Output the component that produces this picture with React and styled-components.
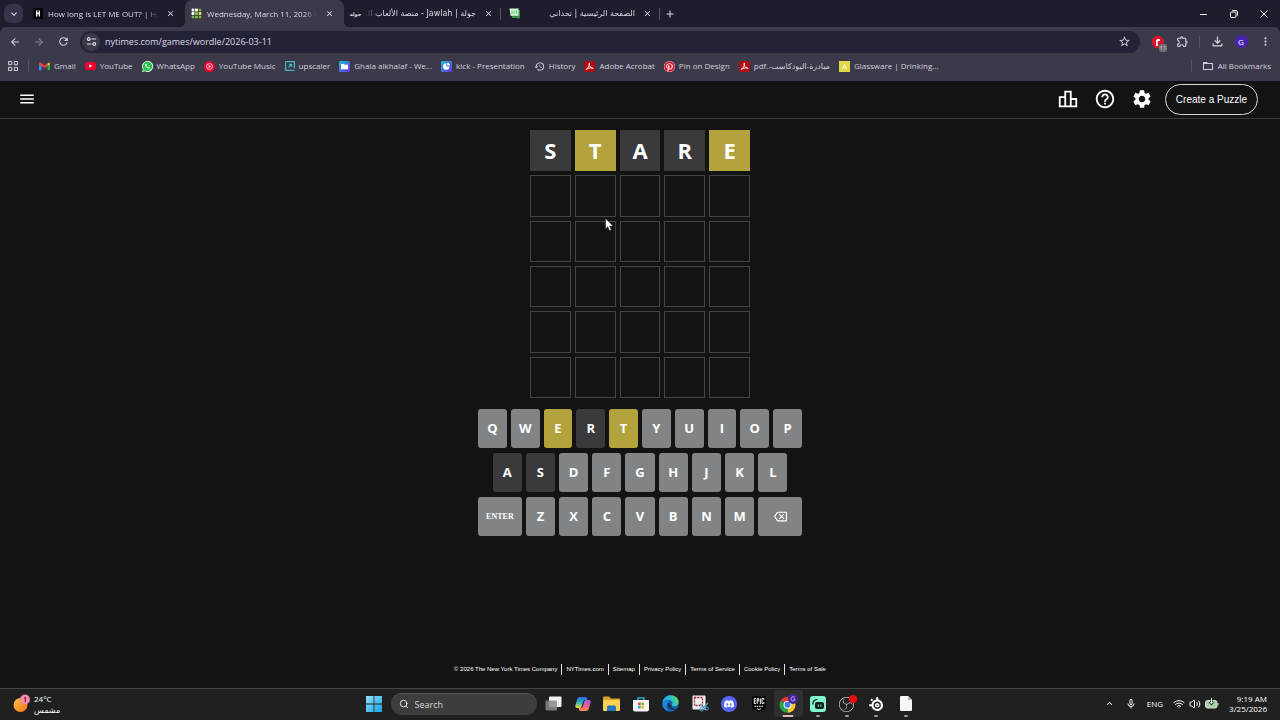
import styled, { createGlobalStyle, css } from "styled-components";
import {
    MdArrowBack,
    MdArrowForward,
    MdRefresh,
    MdStarOutline,
    MdOutlineExtension,
    MdOutlineFileDownload,
    MdMoreVert,
    MdHistory,
    MdFolderOpen,
    MdHelpOutline,
    MdSettings,
    MdOutlineLeaderboard,
    MdOutlineBackspace,
    MdKeyboardArrowDown,
    MdKeyboardArrowUp,
    MdMenu,
    MdAdd,
    MdClose,
    MdMicNone,
} from "react-icons/md";
import { FaPinterest } from "react-icons/fa";
import { SiDiscord, SiObsstudio, SiSteelseries } from "react-icons/si";
import { Search, Wifi, Volume2 } from "lucide-react";

const GlobalStyle = createGlobalStyle`
   * {
      box-sizing: border-box;
   }
   body {
      margin: 0;
      background-color: #131313;
      font-family: "Open Sans", "DejaVu Sans", sans-serif;
   }
   button {
      padding: 0;
      border: none;
      background: none;
      color: inherit;
      font-family: inherit;
      cursor: pointer;
   }
   a {
      color: inherit;
      text-decoration: none;
   }
   svg {
      display: block;
      flex: none;
   }
`;

const Screen = styled.div`
   min-height: 100vh;
   display: flex;
   flex-direction: column;
   color: #ffffff;
`;

// Browser chrome
const TabStrip = styled.div`
   height: 27px;
   display: flex;
   align-items: center;
   padding: 0 1px 0 4px;
   background-color: #1f1c2e;
   color: #dcd9e6;
`;
const TabMenu = styled.button`
   width: 19px;
   height: 19px;
   margin-right: 3px;
   display: flex;
   align-items: center;
   justify-content: center;
   border-radius: 7px;
   background-color: #36334a;
`;
const Tab = styled.div`
   flex: 0 1 159px;
   min-width: 0;
   height: 27px;
   display: flex;
   align-items: center;
   gap: 5px;
   padding: 0 ${(props) => (props.$divided ? "2px" : "8px")} 0 6px;
   position: relative;
   ${(props) =>
       props.$active &&
       css`
          background-color: #3b394a;
          border-radius: 7px 7px 0 0;
          &::before,
          &::after {
             content: "";
             position: absolute;
             bottom: 0;
             width: 5px;
             height: 5px;
          }
          &::before {
             left: -5px;
             background: radial-gradient(circle at 0 0, transparent 5px, #3b394a 5px);
          }
          &::after {
             right: -5px;
             background: radial-gradient(circle at 100% 0, transparent 5px, #3b394a 5px);
          }
       `}
`;
const Favicon = styled.span`
   width: 11px;
   flex: none;
   display: flex;
   justify-content: center;
   font: bold 5px "DejaVu Sans", sans-serif;
`;
const TabTitle = styled.span`
   flex: 1;
   min-width: 0;
   overflow: hidden;
   white-space: nowrap;
   font-size: 8px;
   line-height: 14px;
   direction: ${(props) => (props.$rtl ? "rtl" : "ltr")};
   font-family: ${(props) => (props.$rtl ? '"DejaVu Sans", sans-serif' : "inherit")};
   mask-image: linear-gradient(${(props) => (props.$rtl ? "to left" : "to right")}, #000 88%, transparent);
`;
const TabClose = styled.button`
   width: 14px;
   height: 14px;
   flex: none;
   display: flex;
   align-items: center;
   justify-content: center;
`;
const Divider = styled.span`
   width: 1px;
   height: 12px;
   flex: none;
   background-color: #56536a;
`;
const NewTab = styled.button`
   width: 16px;
   height: 20px;
   flex: none;
   display: flex;
   align-items: center;
   justify-content: center;
`;
const WindowButtons = styled.div`
   margin-left: auto;
   display: flex;
`;
const WindowButton = styled.button`
   width: 30px;
   height: 27px;
   display: flex;
   align-items: center;
   justify-content: center;
`;
const ToolArea = styled.div`
   background-color: #1f1c2e;
`;
const ToolInner = styled.div`
   background-color: #3b394a;
   border-radius: 6px 6px 0 0;
   color: #d3d0de;
`;
const NavBar = styled.div`
   display: flex;
   align-items: center;
   padding: 3px 3px 0;
   height: 26px;
`;
const NavButton = styled.button`
   width: 24px;
   height: 22px;
   flex: none;
   display: flex;
   align-items: center;
   justify-content: center;
   position: relative;
   color: ${(props) => (props.$dim ? "#85828f" : "inherit")};
`;
const AddressBar = styled.form`
   flex: 1;
   height: 22px;
   margin: 0 6px 0 5px;
   padding: 0 4px 0 2px;
   display: flex;
   align-items: center;
   gap: 5px;
   border-radius: 11px;
   background-color: #242236;
`;
const SiteInfo = styled.button`
   width: 18px;
   height: 18px;
   display: flex;
   align-items: center;
   justify-content: center;
   border-radius: 50%;
   background-color: #3b394a;
`;
const AddressInput = styled.input`
   flex: 1;
   min-width: 0;
   border: none;
   outline: none;
   padding: 0;
   background: none;
   color: #dcd9e6;
   font-family: inherit;
   font-size: 9px;
`;
const NavDivider = styled(Divider)`
   margin: 0 5px;
`;
const ExtBadge = styled.span`
   position: absolute;
   right: 3px;
   bottom: 1px;
   width: 8px;
   height: 8px;
   border-radius: 2px;
   background-color: #6d6d70;
   font-size: 6px;
   line-height: 8px;
   text-align: center;
`;
const Avatar = styled.span`
   width: 13px;
   height: 13px;
   border-radius: 50%;
   background-color: #4a22b0;
   color: #ffffff;
   font-size: 8px;
   line-height: 13px;
   text-align: center;
`;
const BookmarkBar = styled.nav`
   height: 28px;
   padding: 0 9px 2px 8px;
   display: flex;
   align-items: center;
   gap: 9px;
   overflow: hidden;
`;
const BookmarkDivider = styled(Divider)`
   margin: 0 1px;
`;
const Bookmark = styled.a`
   display: flex;
   align-items: center;
   gap: 4px;
   white-space: nowrap;
   font-size: 8px;
   line-height: 12px;
`;
const BookmarkEnd = styled.div`
   margin-left: auto;
   display: flex;
   align-items: center;
   gap: 10px;
`;
const PinIcon = styled(FaPinterest)`
   color: #d8102c;
   background-color: #ffffff;
   border-radius: 50%;
`;

// Game
const GameHeader = styled.header`
   height: 38px;
   display: flex;
   align-items: center;
   justify-content: space-between;
   padding: 0 22px 1px 18px;
   border-bottom: 1px solid #3a3a3c;
`;
const HeaderTools = styled.div`
   display: flex;
   align-items: center;
   gap: 12px;
`;
const HeaderIcons = styled.div`
   display: flex;
   gap: 15px;
`;
const HeaderButton = styled.button`
   display: flex;
`;
const CreateButton = styled.button`
   height: 31px;
   padding: 0 10px;
   border: 1px solid #d8d8d8;
   border-radius: 16px;
   font-family: "Liberation Sans", sans-serif;
   font-size: 10px;
   font-weight: 500;
`;
const Game = styled.main`
   flex: 1;
   display: flex;
   flex-direction: column;
   align-items: center;
   gap: 11px;
   padding: 11px 0;
`;
const Board = styled.div`
   position: relative;
   width: 220px;
   height: 268px;
   display: grid;
   grid-template-columns: repeat(5, 1fr);
   grid-template-rows: repeat(6, 1fr);
   gap: 4px;
`;
const Tile = styled.div`
   display: flex;
   align-items: center;
   justify-content: center;
   padding-bottom: 2px;
   font-size: 22px;
   font-weight: 700;
   line-height: 1;
   ${(props) =>
       props.$state
           ? css`
                background-color: ${props.$state === "present" ? "#b3a33c" : "#3a3a3c"};
             `
           : css`
                border: 1px solid #444446;
             `}
`;
const Pointer = styled.svg`
   position: absolute;
   left: 75px;
   top: 88px;
`;
const Keyboard = styled.div`
   width: 324px;
   display: flex;
   flex-direction: column;
   gap: 5px;
`;
const KeyRow = styled.div`
   display: flex;
   gap: 4px;
`;
const Spacer = styled.div`
   flex: 0.5;
   margin-right: ${(props) => (props.$start ? "-4px" : "0")};
   margin-left: ${(props) => (props.$start ? "0" : "-4px")};
`;
const keyColors = { present: "#b3a33c", absent: "#3a3a3c", unused: "#818384" };
const Key = styled.button`
   flex: ${(props) => (props.$wide ? 1.5 : 1)};
   min-width: 0;
   height: 39px;
   padding-bottom: 1px;
   display: flex;
   align-items: center;
   justify-content: center;
   border-radius: 3px;
   background-color: ${(props) => keyColors[props.$state || "unused"]};
   font-size: 13px;
   font-weight: 700;
`;
const EnterLabel = styled.span`
   font-family: "Liberation Serif", serif;
   font-size: 8px;
`;
const Footer = styled.footer`
   display: flex;
   justify-content: center;
   padding-bottom: 13px;
   font-family: "Liberation Sans", sans-serif;
   font-size: 6px;
   line-height: 11px;
`;
const FooterLink = styled.a`
   padding: 0 4px;
   white-space: nowrap;
   & + & {
      border-left: 1px solid #e4e4e4;
   }
`;

// Taskbar
const Taskbar = styled.div`
   height: 32px;
   display: grid;
   grid-template-columns: 1fr auto 1fr;
   align-items: center;
   padding: 0 13px 2px;
   border-top: 1px solid #444444;
   background-color: #202020;
`;
const Weather = styled.button`
   justify-self: start;
   display: flex;
   align-items: center;
   gap: 4px;
   text-align: left;
`;
const WeatherText = styled.span`
   display: flex;
   flex-direction: column;
   font-size: 8px;
   line-height: 11px;
`;
const TaskCenter = styled.div`
   display: flex;
   align-items: center;
   gap: 2px;
`;
const AppList = styled.div`
   width: 382px;
   display: grid;
   grid-template-columns: repeat(13, 1fr);
`;
const TaskButton = styled.button`
   min-width: 29px;
   height: 27px;
   position: relative;
   display: flex;
   align-items: center;
   justify-content: center;
   border-radius: 3px;
   background-color: ${(props) => (props.$run === "active" ? "#2f2f30" : "transparent")};
   ${(props) =>
       props.$run &&
       css`
          &::after {
             content: "";
             position: absolute;
             bottom: 0;
             left: 50%;
             width: ${props.$run === "active" ? "11px" : "4px"};
             height: 2px;
             border-radius: 1px;
             transform: translateX(-50%);
             background-color: ${props.$run === "active" ? "#d9bcc0" : "#9a9a9a"};
          }
       `}
`;
const TaskSearch = styled.label`
   width: 146px;
   height: 22px;
   display: flex;
   align-items: center;
   gap: 6px;
   padding: 0 8px;
   border-radius: 11px;
   border-top: 1px solid #545454;
   background-color: #3d3d3d;
`;
const TaskSearchInput = styled.input`
   flex: 1;
   min-width: 0;
   padding: 0;
   border: none;
   outline: none;
   background: none;
   color: #ffffff;
   font-family: inherit;
   font-size: 9px;
   &::placeholder {
      color: #d6d6d6;
   }
`;
const Tray = styled.div`
   justify-self: end;
   display: flex;
   align-items: center;
   gap: 10px;
`;
const TrayGroup = styled.div`
   display: flex;
   align-items: center;
   gap: 4px;
`;
const TrayText = styled.span`
   font-size: 8px;
   line-height: 10px;
   text-align: right;
`;

// Icons
const HowLongIcon = () => (
    <svg width="10" height="11" viewBox="0 0 10 11">
        <rect width="10" height="11" fill="#050505" />
        <path d="M3 2.500h1.400v2.200h1.200V2.500H7v6H5.600V6H4.400v2.500H3z" fill="#fff" />
    </svg>
);
const WordleIcon = () => (
    <svg width="11" height="11" viewBox="0 0 11 11">
        <rect width="11" height="11" fill="#111" />
        <path d="M.5.5h3v3h-3zM4 .5h3v3H4zM.5 4h3v3h-3z" fill="#fff" />
        <path d="M7.500.5h3v3h-3zM4 4h3v3H4zM.5 7.500h3v3h-3zM4 7.500h3v3H4zM7.500 7.500h3v3h-3z" fill="#7fb04f" />
        <path d="M7.500 4h3v3h-3z" fill="#d3cf6a" />
    </svg>
);
const ChallengeIcon = () => (
    <svg width="11" height="11" viewBox="0 0 11 11">
        <path d="M2 2h9v7l-1 2-2-1H3z" fill="#2e8f49" />
        <path d="M.5.5h9v7.300h-8z" fill="#d5f5d3" />
        <path d="M3 2.500v3.500M5.200 2.500v3.500M7.500 2v4" stroke="#6bc078" />
    </svg>
);
const TuneIcon = () => (
    <svg width="11" height="11" viewBox="0 0 12 12" fill="none" stroke="#dcd9e6" strokeWidth="1.300">
        <circle cx="3" cy="3.300" r="1.500" />
        <path d="M6 3.300h5M1 8.700h5" />
        <circle cx="9" cy="8.700" r="1.500" />
    </svg>
);
const RestoreIcon = () => (
    <svg width="8" height="8" viewBox="0 0 8 8" fill="none" stroke="#fff">
        <rect x="0.500" y="2" width="5.500" height="5.500" rx="1.200" />
        <path d="M2.300.600H6a1.500 1.500 0 0 1 1.500 1.500v3.600" />
    </svg>
);
const AppsIcon = () => (
    <svg width="10" height="10" viewBox="0 0 10 10" fill="none" stroke="#d3d0de">
        <path d="M.5.5h3.200v3.200H.5zM6.300.5h3.200v3.200H6.300zM.5 6.300h3.200v3.200H.5zM6.300 6.300h3.200v3.200H6.300z" />
    </svg>
);
const AdBlockIcon = () => (
    <svg width="12" height="12" viewBox="0 0 12 12">
        <path d="M3.500 0h5L12 3.500v5L8.500 12h-5L0 8.500v-5z" fill="#d4152c" />
        <path d="M4 10V5.200C4 3 6 2.500 8 3.200V5H5.800v5z" fill="#fff" />
    </svg>
);
const GmailIcon = () => (
    <svg width="11" height="9" viewBox="0 0 12 9">
        <path d="M0 1.500V8.500h2.700V3.500z" fill="#4285f4" />
        <path d="M12 1.500V8.500H9.300V3.500z" fill="#34a853" />
        <path d="M0 1.200C0 0 1.400-.3 2.200.4L6 3.400v3L0 2z" fill="#ea4335" />
        <path d="M6 3.400l3.300-2.600v3.100L6 6.400z" fill="#ea4335" />
        <path d="M9.300.9c1-.9 2.700-.7 2.700.6v.6L9.300 4z" fill="#fbbc04" />
    </svg>
);
const YoutubeIcon = () => (
    <svg width="11" height="8" viewBox="0 0 11 8">
        <rect width="11" height="8" rx="2.200" fill="#f0002c" />
        <path d="M4.400 2.200v3.600L7.400 4z" fill="#fff" />
    </svg>
);
const WhatsIcon = () => (
    <svg width="11" height="11" viewBox="0 0 24 24">
        <path d="M0 24l1.700-6.200A12 12 0 1 1 6.300 22.400z" fill="#e9fff0" />
        <path d="M2 22l1.400-5A10.200 10.200 0 1 1 7 20.700z" fill="#27c24c" />
        <path d="M8 6.500c-1.500 1.200-1.300 3.500 1.500 6.600s5.500 4.300 7.200 3c1-.8 1-1.600.6-1.900l-2.200-1.200-1.300 1.300c-1.500-.6-3-2-3.600-3.500l1-1.200-1-2.600c-.5-.8-1.500-.9-2.200-.5z" fill="#fff" />
    </svg>
);
const YtMusicIcon = () => (
    <svg width="11" height="11" viewBox="0 0 11 11">
        <circle cx="5.500" cy="5.500" r="5.500" fill="#f0002c" />
        <circle cx="5.500" cy="5.500" r="2.900" fill="none" stroke="#fff" strokeWidth="0.800" />
        <path d="M4.600 3.900v3.200l2.500-1.600z" fill="#fff" />
    </svg>
);
const UpscalerIcon = () => (
    <svg width="10" height="10" viewBox="0 0 10 10" fill="none" stroke="#45b6bd" strokeWidth="1.200">
        <path d="M2.500.6H9.400V7.500M.6 2.500v6.900h6.900M.6.6h2M3.500 6.500l3-3M4 3.400h2.600V6" />
        <path d="M.6.6v2M9.400 9.400h-2" />
    </svg>
);
const CanvaFolderIcon = () => (
    <svg width="11" height="11" viewBox="0 0 11 11">
        <defs>
            <linearGradient id="cv" x1="0" y1="0" x2="1" y2="1">
                <stop offset="0" stopColor="#17c3d4" />
                <stop offset="1" stopColor="#6d2be8" />
            </linearGradient>
        </defs>
        <rect width="11" height="11" rx="1.500" fill="url(#cv)" />
        <path d="M2 3h3l.8.8H9V8.200H2z" fill="#fff" />
    </svg>
);
const CanvaDeckIcon = () => (
    <svg width="11" height="11" viewBox="0 0 11 11">
        <rect width="11" height="11" rx="1.500" fill="url(#cv)" />
        <path d="M5.300 2.300A3.200 3.200 0 1 0 8.500 5.500H5.300z" fill="#fff" />
        <path d="M6.300 1.800v2.600h2.600A2.600 2.600 0 0 0 6.300 1.800z" fill="#fff" />
    </svg>
);
const AcrobatIcon = () => (
    <svg width="11" height="11" viewBox="0 0 11 11">
        <rect width="11" height="11" rx="2" fill="#b30b12" />
        <path d="M2 8.600C4 7.500 5.600 5 5.500 2.200c-.8 0-.6 1.600.4 3.200.8 1.300 2 2.200 3.200 2.100.3-1.200-4.200-1-7.100 1.100z" fill="none" stroke="#fff" strokeWidth="0.900" />
    </svg>
);
const GlasswareIcon = () => (
    <svg width="11" height="11" viewBox="0 0 11 11">
        <rect width="11" height="11" fill="#e0d94a" />
        <path d="M3.700 8L5.500 3l1.800 5M4.300 6.400h2.400" fill="none" stroke="#fbf9d0" strokeWidth="0.900" />
    </svg>
);
const WeatherIcon = () => (
    <svg width="17" height="19" viewBox="0 0 17 19">
        <defs>
            <linearGradient id="sun" x1="0" y1="0" x2="1" y2="1">
                <stop offset="0" stopColor="#ffc04a" />
                <stop offset="1" stopColor="#ee7411" />
            </linearGradient>
        </defs>
        <circle cx="7.500" cy="11" r="7" fill="url(#sun)" />
        <circle cx="12" cy="5.500" r="5" fill="#f58aa5" />
        <path d="M11 4.300l1.300-1v4.700" fill="none" stroke="#30131b" strokeWidth="0.900" />
    </svg>
);
const StartIcon = () => (
    <svg width="16" height="16" viewBox="0 0 16 16">
        <defs>
            <linearGradient id="win" x1="0" y1="0" x2="1" y2="1">
                <stop offset="0" stopColor="#8be2fb" />
                <stop offset="1" stopColor="#1ea2e8" />
            </linearGradient>
        </defs>
        <path d="M0 0h7.600v7.600H0zM8.400 0H16v7.600H8.400zM0 8.400h7.600V16H0zM8.400 8.400H16V16H8.400z" fill="url(#win)" />
    </svg>
);
const TaskViewIcon = () => (
    <svg width="17" height="15" viewBox="0 0 17 15">
        <rect x="4" y="0.500" width="12.500" height="10.500" rx="1" fill="#f2f2f2" />
        <rect x="0.500" y="4.500" width="11.500" height="10" rx="1" fill="#8a8a8a" fillOpacity="0.850" />
    </svg>
);
const CopilotIcon = () => (
    <svg width="16" height="16" viewBox="0 0 16 16">
        <defs>
            <linearGradient id="cpA" x1="0.500" y1="0" x2="0.300" y2="1">
                <stop offset="0" stopColor="#2b6be8" />
                <stop offset="0.500" stopColor="#27b5b8" />
                <stop offset="1" stopColor="#f2cf3c" />
            </linearGradient>
            <linearGradient id="cpB" x1="0.600" y1="0" x2="0.400" y2="1">
                <stop offset="0" stopColor="#a45af0" />
                <stop offset="0.500" stopColor="#ee5c93" />
                <stop offset="1" stopColor="#f98f4c" />
            </linearGradient>
        </defs>
        <path d="M5 1h5.500c1 0 1.300.7 1.600 1.700l.4 1.300H9.800c-1 0-1.300.6-1.600 1.500L6.700 10.500c-.3 1-.7 1.500-1.700 1.500H2C.6 12 0 10.600.4 9.200L2.300 3C2.700 1.700 3.600 1 5 1z" fill="url(#cpA)" />
        <path d="M11 15H5.500c-1 0-1.300-.7-1.600-1.700L3.500 12h2.700c1 0 1.300-.6 1.600-1.500l1.500-5c.3-1 .7-1.500 1.700-1.500h3c1.400 0 2 1.400 1.600 2.800L13.700 13c-.4 1.300-1.300 2-2.700 2z" fill="url(#cpB)" />
    </svg>
);
const ExplorerIcon = () => (
    <svg width="17" height="15" viewBox="0 0 17 15">
        <path d="M0 1.500A1 1 0 0 1 1 .5h5l2 2h8a1 1 0 0 1 1 1V5H0z" fill="#e0a021" />
        <rect y="4" width="17" height="11" rx="1" fill="#fbd153" />
        <path d="M4 15v-4a1.500 1.500 0 0 1 1.500-1.500h6A1.500 1.500 0 0 1 13 11v4z" fill="#1c78c0" />
    </svg>
);
const StoreIcon = () => (
    <svg width="16" height="16" viewBox="0 0 16 16">
        <path d="M5 5V1.800h6V5" fill="none" stroke="#35b7ea" strokeWidth="1.300" />
        <path d="M0 4h16v9.500A2 2 0 0 1 14 15.500H2A2 2 0 0 1 0 13.500z" fill="#f4f6f8" />
        <path d="M5 6.500h2.700v2.700H5z" fill="#f04e2a" />
        <path d="M8.300 6.500H11v2.700H8.300z" fill="#7cb82a" />
        <path d="M5 9.800h2.700v2.700H5z" fill="#2ba2e4" />
        <path d="M8.300 9.800H11v2.700H8.300z" fill="#f7b51b" />
    </svg>
);
const EdgeIcon = () => (
    <svg width="17" height="17" viewBox="0 0 17 17">
        <defs>
            <linearGradient id="edA" x1="0" y1="0.500" x2="1" y2="0.300">
                <stop offset="0" stopColor="#1f9fe5" />
                <stop offset="0.600" stopColor="#2fc4c9" />
                <stop offset="1" stopColor="#6ad94f" />
            </linearGradient>
        </defs>
        <circle cx="8.500" cy="8.500" r="8.200" fill="#1566b8" />
        <path d="M.4 8C.9 3.500 4.400.3 8.600.3c4.700 0 8.100 3.200 8.100 6.700 0 2.700-2 4.200-4.300 4.200-2 0-2.900-.9-2.500-1.500 1.600-2.200-.2-4.600-3-4.600C3.900 5.100 1.300 6.200.4 8z" fill="url(#edA)" />
        <path d="M6.500 7.300c-2.800 3 .3 8 5.200 7.600 1.500-.1 2.900-.9 3.800-1.600-2.200 1-6.600.4-6.200-3z" fill="#202020" fillOpacity="0.700" />
        <path d="M.4 8c-.2 4 2.600 8.300 7.600 8.700C3.600 14.500 3.600 8.600 7 7 4.500 5.200 1.500 6 .4 8z" fill="#1d86d8" />
    </svg>
);
const SnipIcon = () => (
    <svg width="17" height="17" viewBox="0 0 17 17">
        <rect x="0.500" y="0.500" width="13" height="14" rx="1" fill="#eef0f2" />
        <rect x="2.500" y="2.500" width="8" height="8" fill="none" stroke="#b3263a" strokeWidth="1.300" strokeDasharray="2 1" />
        <path d="M8 9l6 6M16 8l-5.500 5.500" stroke="#57a9c9" strokeWidth="1.400" />
        <circle cx="9.500" cy="14.300" r="1.700" fill="none" stroke="#57a9c9" />
        <circle cx="14.800" cy="13.500" r="1.600" fill="none" stroke="#57a9c9" />
    </svg>
);
const DiscordIcon = () => (
    <svg width="16" height="16" viewBox="0 0 16 16">
        <circle cx="8" cy="8" r="8" fill="#5865f2" />
        <SiDiscord x="3" y="3" size="10" color="#fff" />
    </svg>
);
const EpicIcon = () => (
    <svg width="14" height="16" viewBox="0 0 14 16">
        <path d="M1 0h12a1 1 0 0 1 1 1v12l-7 3-7-3V1a1 1 0 0 1 1-1z" fill="#0b0b0b" />
        <path d="M4 2.500H2.300v5H4M2.300 5h1.500M5.200 8V2.500h1.500v2.700H5.200M8.400 2.500V8M11.800 4V2.500H10v5h1.800V6" fill="none" stroke="#fff" strokeWidth="0.900" />
        <path d="M2.500 10.300h9" stroke="#bbb" strokeWidth="1.200" strokeDasharray="1.700 0.600" />
        <path d="M5 12.700l2 .9 2-.9" fill="none" stroke="#fff" strokeWidth="0.800" />
    </svg>
);
const ChromeIcon = () => (
    <svg width="20" height="20" viewBox="0 0 20 20">
        <path d="M9.500 10.800L2.600 6.800A8 8 0 0 1 16.400 6.800z" fill="#e33b2e" />
        <path d="M9.500 10.800L16.400 6.800A8 8 0 0 1 9.500 18.800z" fill="#f9c62b" />
        <path d="M9.500 10.800V18.800A8 8 0 0 1 2.600 6.800z" fill="#2ba24c" />
        <circle cx="9.500" cy="10.800" r="3.900" fill="#fff" />
        <circle cx="9.500" cy="10.800" r="3" fill="#3b7de9" />
        <circle cx="15" cy="5" r="5" fill="#47219f" />
        <path d="M16.800 3.700a2.100 2.100 0 1 0 .3 1.500H15.300" fill="none" stroke="#d9cdf5" strokeWidth="0.800" />
    </svg>
);
const StreamlabsIcon = () => (
    <svg width="16" height="16" viewBox="0 0 16 16">
        <rect width="16" height="16" rx="3" fill="#80f5d2" />
        <path d="M3 8.500V7.500C3 5 5 3.500 7.500 3.500" fill="none" stroke="#0c1f1c" strokeWidth="1.200" />
        <rect x="5" y="6" width="9" height="7" rx="2" fill="#0c1f1c" />
        <path d="M8.300 8.500v2.200M10.800 8.500v2.200" stroke="#80f5d2" />
    </svg>
);
const ObsIcon = () => (
    <svg width="20" height="18" viewBox="0 0 20 18">
        <SiObsstudio x="2" y="2" size="15" color="#c9c9c9" />
        <circle cx="16" cy="4" r="4" fill="#f00a0a" />
    </svg>
);
const FileIcon = () => (
    <svg width="12" height="15" viewBox="0 0 12 15">
        <path d="M1 0h7l4 4v10a1 1 0 0 1-1 1H1a1 1 0 0 1-1-1V1a1 1 0 0 1 1-1z" fill="#f6f6f6" />
        <path d="M8 0l4 4H8z" fill="#b9b9b9" />
    </svg>
);
const BatteryIcon = () => (
    <svg width="14" height="11" viewBox="0 0 14 11">
        <rect x="0.500" y="2.500" width="11.500" height="7.500" rx="2" fill="#a9d1a6" stroke="#cfe3cd" />
        <path d="M13 5v2.500" stroke="#cfe3cd" />
        <path d="M6.500 0v5.500M4.500 4l2 2 2-2" fill="none" stroke="#1b1b1b" strokeWidth="2" />
        <path d="M6.500 0v5.500M4.700 4l1.800 1.800L8.300 4" fill="none" stroke="#fff" />
    </svg>
);

const tabs = [
    { title: "How long is LET ME OUT? | How", icon: <HowLongIcon /> },
    { title: "Wednesday, March 11, 2026 Wo", icon: <WordleIcon />, active: true },
    { title: "جولة | Jawlah - منصة الألعاب التف", icon: "جوله", rtl: true },
    { title: "الصفحة الرئيسية | تحداني", icon: <ChallengeIcon />, rtl: true },
];

const bookmarks = [
    { label: "Gmail", icon: <GmailIcon /> },
    { label: "YouTube", icon: <YoutubeIcon /> },
    { label: "WhatsApp", icon: <WhatsIcon /> },
    { label: "YouTube Music", icon: <YtMusicIcon /> },
    { label: "upscaler", icon: <UpscalerIcon /> },
    { label: "Ghala alkhalaf - We...", icon: <CanvaFolderIcon /> },
    { label: "kick - Presentation", icon: <CanvaDeckIcon /> },
    { label: "History", icon: <MdHistory size={11} /> },
    { label: "Adobe Acrobat", icon: <AcrobatIcon /> },
    { label: "Pin on Design", icon: <PinIcon size={11} /> },
    { label: "pdf.-مبادرة-البودكاست", icon: <AcrobatIcon /> },
    { label: "Glassware | Drinking...", icon: <GlasswareIcon /> },
];

const guess = [
    ["S", "absent"],
    ["T", "present"],
    ["A", "absent"],
    ["R", "absent"],
    ["E", "present"],
];
const keyState = Object.fromEntries(guess);

const footerLinks = [
    "© 2026 The New York Times Company",
    "NYTimes.com",
    "Sitemap",
    "Privacy Policy",
    "Terms of Service",
    "Cookie Policy",
    "Terms of Sale",
];

const apps = [
    { name: "Task view", icon: <TaskViewIcon /> },
    { name: "Copilot", icon: <CopilotIcon /> },
    { name: "Explorer", icon: <ExplorerIcon /> },
    { name: "Store", icon: <StoreIcon /> },
    { name: "Edge", icon: <EdgeIcon /> },
    { name: "Snipping Tool", icon: <SnipIcon /> },
    { name: "Discord", icon: <DiscordIcon /> },
    { name: "Epic Games", icon: <EpicIcon /> },
    { name: "Chrome", icon: <ChromeIcon />, run: "active" },
    { name: "Streamlabs", icon: <StreamlabsIcon />, run: "open" },
    { name: "OBS", icon: <ObsIcon />, run: "open" },
    { name: "SteelSeries", icon: <SiSteelseries size={14} />, run: "open" },
    { name: "Document", icon: <FileIcon />, run: "open" },
];

const Letters = ({ keys }) =>
    keys.split("").map((k) => (
        <Key key={k} $state={keyState[k]}>
            {k}
        </Key>
    ));

const Browser = () => (
    <>
        <TabStrip>
            <TabMenu aria-label="Search tabs">
                <MdKeyboardArrowDown size={12} />
            </TabMenu>
            {tabs.map((tab) => (
                <Tab key={tab.title} $active={tab.active} $divided={tab.rtl}>
                    <Favicon>{tab.icon}</Favicon>
                    <TabTitle $rtl={tab.rtl}>{tab.title}</TabTitle>
                    <TabClose aria-label="Close tab">
                        <MdClose size={9} />
                    </TabClose>
                    {tab.rtl && <Divider />}
                </Tab>
            ))}
            <NewTab aria-label="New tab">
                <MdAdd size={12} />
            </NewTab>
            <WindowButtons>
                <WindowButton aria-label="Minimize">
                    <svg width="8" height="8" viewBox="0 0 8 8">
                        <path d="M0 4.500h7" stroke="#fff" />
                    </svg>
                </WindowButton>
                <WindowButton aria-label="Restore">
                    <RestoreIcon />
                </WindowButton>
                <WindowButton aria-label="Close">
                    <svg width="8" height="8" viewBox="0 0 8 8">
                        <path d="M.5.5l7 7M7.500.5l-7 7" stroke="#fff" />
                    </svg>
                </WindowButton>
            </WindowButtons>
        </TabStrip>
        <ToolArea>
            <ToolInner>
                <NavBar>
                    <NavButton aria-label="Back">
                        <MdArrowBack size={12} />
                    </NavButton>
                    <NavButton aria-label="Forward" $dim>
                        <MdArrowForward size={12} />
                    </NavButton>
                    <NavButton aria-label="Reload">
                        <MdRefresh size={13} />
                    </NavButton>
                    <AddressBar>
                        <SiteInfo type="button" aria-label="Site information">
                            <TuneIcon />
                        </SiteInfo>
                        <AddressInput aria-label="Address" defaultValue="nytimes.com/games/wordle/2026-03-11" />
                        <NavButton type="button" aria-label="Bookmark">
                            <MdStarOutline size={13} />
                        </NavButton>
                    </AddressBar>
                    <NavButton aria-label="Ad blocker">
                        <AdBlockIcon />
                        <ExtBadge>11</ExtBadge>
                    </NavButton>
                    <NavButton aria-label="Extensions">
                        <MdOutlineExtension size={13} />
                    </NavButton>
                    <NavDivider />
                    <NavButton aria-label="Downloads">
                        <MdOutlineFileDownload size={15} />
                    </NavButton>
                    <NavButton aria-label="Profile">
                        <Avatar>G</Avatar>
                    </NavButton>
                    <NavButton aria-label="Menu">
                        <MdMoreVert size={13} />
                    </NavButton>
                </NavBar>
                <BookmarkBar>
                    <AppsIcon />
                    <BookmarkDivider />
                    {bookmarks.map((item) => (
                        <Bookmark key={item.label} href="#">
                            {item.icon}
                            <bdi dir="ltr">{item.label}</bdi>
                        </Bookmark>
                    ))}
                    <BookmarkEnd>
                        <Divider />
                        <Bookmark href="#">
                            <MdFolderOpen size={12} />
                            All Bookmarks
                        </Bookmark>
                    </BookmarkEnd>
                </BookmarkBar>
            </ToolInner>
        </ToolArea>
    </>
);

const Wordle = () => (
    <>
        <GameHeader>
            <HeaderButton aria-label="Navigation">
                <MdMenu size={18} />
            </HeaderButton>
            <HeaderTools>
                <HeaderIcons>
                    <HeaderButton aria-label="Statistics">
                        <MdOutlineLeaderboard size={22} />
                    </HeaderButton>
                    <HeaderButton aria-label="Help">
                        <MdHelpOutline size={22} />
                    </HeaderButton>
                    <HeaderButton aria-label="Settings">
                        <MdSettings size={22} />
                    </HeaderButton>
                </HeaderIcons>
                <CreateButton>Create a Puzzle</CreateButton>
            </HeaderTools>
        </GameHeader>
        <Game>
            <Board>
                {guess.map(([letter, state]) => (
                    <Tile key={letter} $state={state}>
                        {letter}
                    </Tile>
                ))}
                {Array.from({ length: 25 }, (_, i) => (
                    <Tile key={i} />
                ))}
                <Pointer width="9" height="14" viewBox="0 0 9 14">
                    <path d="M.5.500v10.500l2.300-2.200 1.700 4 1.800-.8-1.700-3.900h3.500z" fill="#fff" stroke="#111" strokeWidth="0.500" />
                </Pointer>
            </Board>
            <Keyboard>
                <KeyRow>
                    <Letters keys="QWERTYUIOP" />
                </KeyRow>
                <KeyRow>
                    <Spacer $start />
                    <Letters keys="ASDFGHJKL" />
                    <Spacer />
                </KeyRow>
                <KeyRow>
                    <Key $wide>
                        <EnterLabel>ENTER</EnterLabel>
                    </Key>
                    <Letters keys="ZXCVBNM" />
                    <Key $wide aria-label="Backspace">
                        <MdOutlineBackspace size={13} />
                    </Key>
                </KeyRow>
            </Keyboard>
        </Game>
        <Footer>
            {footerLinks.map((text) => (
                <FooterLink key={text} href="#">
                    {text}
                </FooterLink>
            ))}
        </Footer>
    </>
);

const Desktop = () => (
    <Taskbar>
        <Weather>
            <WeatherIcon />
            <WeatherText>
                <span>24°C</span>
                <span>مشمس</span>
            </WeatherText>
        </Weather>
        <TaskCenter>
            <TaskButton aria-label="Start">
                <StartIcon />
            </TaskButton>
            <TaskSearch>
                <Search size={10} />
                <TaskSearchInput aria-label="Search" placeholder="Search" />
            </TaskSearch>
            <AppList>
                {apps.map((app) => (
                    <TaskButton key={app.name} aria-label={app.name} $run={app.run}>
                        {app.icon}
                    </TaskButton>
                ))}
            </AppList>
        </TaskCenter>
        <Tray>
            <MdKeyboardArrowUp size={11} />
            <MdMicNone size={12} />
            <TrayText>ENG</TrayText>
            <TrayGroup>
                <Wifi size={12} />
                <Volume2 size={12} />
                <BatteryIcon />
            </TrayGroup>
            <TrayText>
                9:19 AM
                <br />
                3/25/2026
            </TrayText>
        </Tray>
    </Taskbar>
);

export default function App() {
    return (
        <Screen>
            <GlobalStyle />
            <Browser />
            <Wordle />
            <Desktop />
        </Screen>
    );
}
